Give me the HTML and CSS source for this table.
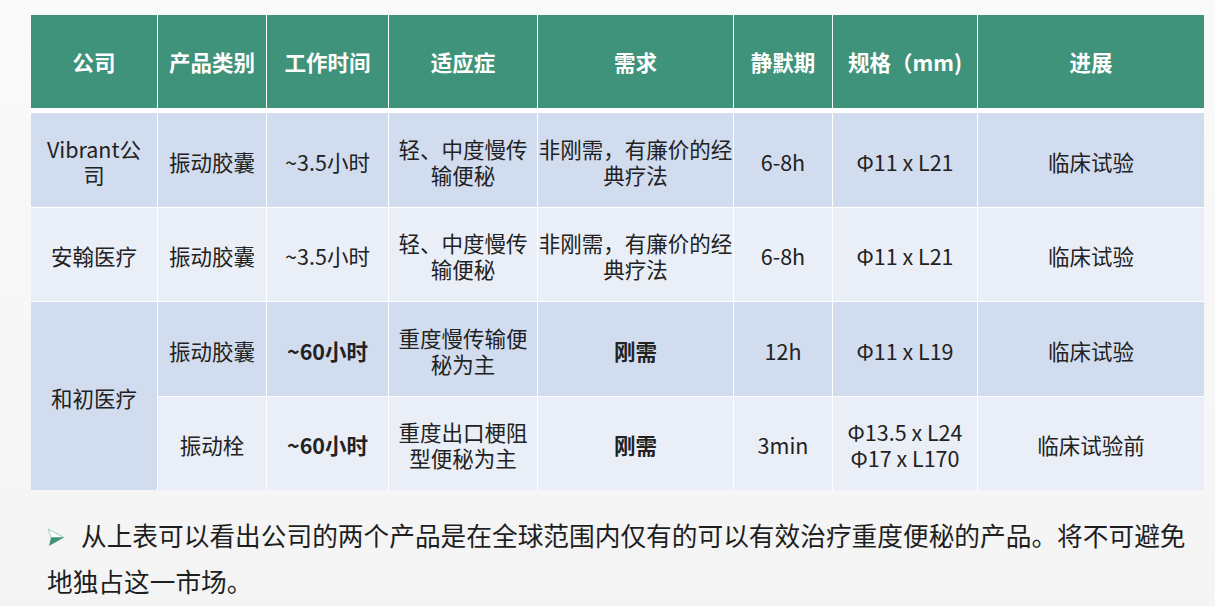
FILE: index.html
```html
<!DOCTYPE html>
<html lang="zh-CN">
<head>
<meta charset="utf-8">
<title>产品对比</title>
<link rel="stylesheet" href="styles.css">
</head>
<body>
<div class="page">
  <div class="table">
    <div class="grid head">
      <div class="th">公司</div>
      <div class="th">产品类别</div>
      <div class="th">工作时间</div>
      <div class="th">适应症</div>
      <div class="th">需求</div>
      <div class="th">静默期</div>
      <div class="th">规格（mm)</div>
      <div class="th">进展</div>
    </div>
    <div class="grid body">
      <div class="td odd r1">Vibrant公<br>司</div>
      <div class="td odd r1">振动胶囊</div>
      <div class="td odd r1">~3.5小时</div>
      <div class="td odd r1">轻、中度慢传<br>输便秘</div>
      <div class="td odd r1">非刚需，有廉价的经<br>典疗法</div>
      <div class="td odd r1">6-8h</div>
      <div class="td odd r1">Φ11 x L21</div>
      <div class="td odd r1">临床试验</div>

      <div class="td even r2">安翰医疗</div>
      <div class="td even r2">振动胶囊</div>
      <div class="td even r2">~3.5小时</div>
      <div class="td even r2">轻、中度慢传<br>输便秘</div>
      <div class="td even r2">非刚需，有廉价的经<br>典疗法</div>
      <div class="td even r2">6-8h</div>
      <div class="td even r2">Φ11 x L21</div>
      <div class="td even r2">临床试验</div>

      <div class="td odd span2">和初医疗</div>
      <div class="td odd r3">振动胶囊</div>
      <div class="td odd r3 b">~60小时</div>
      <div class="td odd r3">重度慢传输便<br>秘为主</div>
      <div class="td odd r3 b">刚需</div>
      <div class="td odd r3">12h</div>
      <div class="td odd r3">Φ11 x L19</div>
      <div class="td odd r3">临床试验</div>

      <div class="td even r4">振动栓</div>
      <div class="td even r4 b">~60小时</div>
      <div class="td even r4">重度出口梗阻<br>型便秘为主</div>
      <div class="td even r4 b">刚需</div>
      <div class="td even r4">3min</div>
      <div class="td even r4">Φ13.5 x L24<br>Φ17 x L170</div>
      <div class="td even r4">临床试验前</div>
    </div>
  </div>
  <p class="note"><span class="bullet"><svg width="18" height="19" viewBox="0 0 18 19"><polygon points="1,1 17,9.5 4,9.5" fill="#ffffff" stroke="#9fcfbf" stroke-width="1"/><polygon points="4,9.5 17,9.5 2,18" fill="#3f937a"/></svg></span>从上表可以看出公司的两个产品是在全球范围内仅有的可以有效治疗重度便秘的产品。将不可避免<br>地独占这一市场。</p>
</div>
</body>
</html>
```
FILE: styles.css
```css
* { box-sizing: border-box; }
html, body { margin: 0; padding: 0; }
body {
  width: 1215px;
  height: 606px;
  overflow: hidden;
  background: #f5f5f5;
  font-family: "Noto Sans CJK SC", "Microsoft YaHei", sans-serif;
  color: #222;
}
.page {
  padding: 15px 0 0 31px;
  background: linear-gradient(180deg, #fafafa 0%, #f4f4f4 100%);
  height: 606px;
}
.table {
  width: 1173px;
  background: #ffffff;
  display: flex;
  flex-direction: column;
  gap: 5px;
}
.grid {
  display: grid;
  grid-template-columns: 126px 108px 121px 148px 195px 98px 144px 226px;
  column-gap: 1px;
  row-gap: 1px;
}
.head { grid-template-rows: 93px; }
.body { grid-template-rows: 94px 93px 94px 93px; }
.th {
  background: #3f937a;
  color: #ffffff;
  font-weight: bold;
  font-size: 21.5px;
  display: flex;
  align-items: center;
  justify-content: center;
  text-align: center;
  white-space: nowrap;
}
.td {
  font-size: 21.5px;
  line-height: 26px;
  display: flex;
  align-items: center;
  justify-content: center;
  text-align: center;
  white-space: nowrap;
  padding-top: 3px;
}
.odd { background: #d1dcef; }
.even { background: #e9eef7; }
.b { font-weight: bold; }
.span2 { grid-row: span 2; }
.note {
  margin: 22px 0 0 16px;
  font-size: 25.7px;
  line-height: 46px;
  color: #1e1e1e;
  white-space: nowrap;
}
.bullet {
  display: inline-block;
  width: 34px;
  vertical-align: -1px;
}
.bullet svg { display: block; }
```
